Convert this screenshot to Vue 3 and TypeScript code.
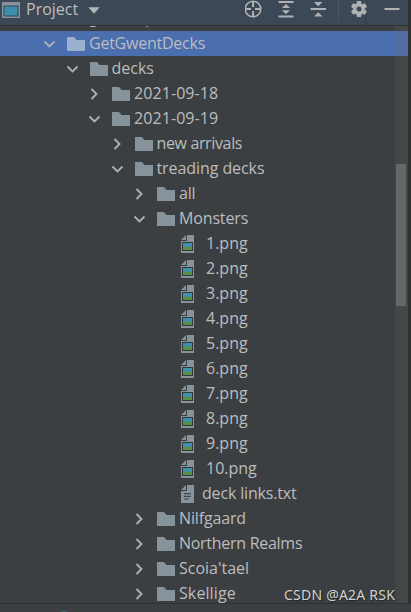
<script setup lang="ts">
type Icon = 'folder' | 'image' | 'text'
interface Row { name: string; depth: number; icon: Icon; open?: boolean; selected?: boolean; tracking?: number }

const rows: Row[] = [
  { name: 'GetGwentDecks', depth: 0, icon: 'folder', open: true, selected: true, tracking: -0.24 },
  { name: 'decks', depth: 1, icon: 'folder', open: true },
  { name: '2021-09-18', depth: 2, icon: 'folder', open: false, tracking: 0.08 },
  { name: '2021-09-19', depth: 2, icon: 'folder', open: true, tracking: 0.08 },
  { name: 'new arrivals', depth: 3, icon: 'folder', open: false, tracking: -0.36 },
  { name: 'treading decks', depth: 3, icon: 'folder', open: true, tracking: -0.08 },
  { name: 'all', depth: 4, icon: 'folder', open: false, tracking: -0.2 },
  { name: 'Monsters', depth: 4, icon: 'folder', open: true, tracking: -0.15 },
  ...Array.from({ length: 10 }, (_, i): Row => ({ name: `${i + 1}.png`, depth: 5, icon: 'image' })),
  { name: 'deck links.txt', depth: 5, icon: 'text', tracking: -0.17 },
  { name: 'Nilfgaard', depth: 4, icon: 'folder', open: false, tracking: -0.15 },
  { name: 'Northern Realms', depth: 4, icon: 'folder', open: false, tracking: -0.28 },
  { name: "Scoia'tael", depth: 4, icon: 'folder', open: false },
  { name: 'Skellige', depth: 4, icon: 'folder', open: false, tracking: 0.1 },
]
const rowStyle = (r: Row) => ({
  paddingLeft: `${43 + r.depth * 22.5}px`,
  letterSpacing: `${r.tracking ?? 0}px`,
})
</script>

<template>
  <div class="panel">
    <header class="bar">
      <svg class="window" width="18" height="16" viewBox="0 0 18 16"><path fill="#87939a" d="M0 0h18v16H0z" /><path fill="#34454f" d="M1.5 3.5h15v11h-15z" /><path fill="#3d8dac" d="M2.5 4.5h13v9h-13z" /></svg>
      <span class="title">Project</span>
      <svg class="caret" width="12" height="7" viewBox="0 0 12 7"><path fill="#b0b5b8" d="M.3.3h11.4L6 6.8z" /></svg>
      <svg class="tools" width="166" height="25" viewBox="0 0 166 25">
        <g fill="none" stroke="#afb1b3" stroke-width="2"><circle cx="8" cy="9" r="7.800" stroke-width="1.600" /><path d="M8 1v6M8 11v6M0 9h6M10 9h6" /><path d="M33.500 2h15M33.500 16.500h15M65.500 9h15.500M139.500 9h15" /></g>
        <path fill="#afb1b3" d="M37 8 41 4l4 4zM37 10.200h8L41 14.200zM69 2h8.500l-4.250 4.200zM69 16.500h8.500L73.250 12.200z" />
        <path stroke="#525658" d="M93.500 0v21" />
        <g transform="translate(114 9)">
          <g fill="#afb1b3"><circle r="5.800" /><path d="M-2-8h4l.7 3h-5.400zM-2 8h4l.7-3h-5.400z" /><path transform="rotate(60)" d="M-2-8h4l.7 3h-5.400zM-2 8h4l.7-3h-5.400z" /><path transform="rotate(120)" d="M-2-8h4l.7 3h-5.400zM-2 8h4l.7-3h-5.400z" /></g>
          <circle r="2.500" fill="#3c4855" />
        </g>
        <path stroke="#343a40" d="M120.500 15v10" />
      </svg>
    </header>
    <div class="tree">
      <div class="cut"><span>gwent spider_</span></div>
      <div v-for="r in rows" :key="r.name" class="row" :class="{ selected: r.selected }" :style="rowStyle(r)">
        <svg class="arrow" width="14" height="14" viewBox="0 0 14 14"><path v-if="r.open !== undefined" :d="r.open ? 'M1.500 4.500 6.500 9.500 11.500 4.500' : 'M3.500 2 8.500 7 3.500 12'" fill="none" stroke="#adb0b2" stroke-width="1.900" /></svg>
        <svg v-if="r.icon === 'folder'" class="folder" width="18" height="14" viewBox="0 0 18 14"><path d="M0 0h7l2.500 3H18v11H0z" /></svg>
        <svg v-else class="file" width="13" height="18" viewBox="0 0 13 18">
          <path fill="#87939a" d="M6 0h7v18H0V6h6zM5 0v5H0z" />
          <template v-if="r.icon === 'image'"><path fill="#30383c" d="M1 7h11v9H1z" /><path fill="#3e8fb0" d="M2 8h9v7H2z" /><path fill="#58903f" d="M2 12.500l2.500-1 2.500 1 2-1.500 2 1.500V15H2z" /></template>
          <path v-else stroke="#414a4f" stroke-width="1.200" d="M3 8.600h7M3 11.300h7M3 14h5" />
        </svg>
        <span class="name" :class="r.icon">{{ r.name }}</span>
      </div>
      <div class="track"><div class="thumb" /></div>
    </div>
    <footer class="foot"><i /></footer>
    <div class="edge" />
    <div class="mark">CSDN @A2A RSK</div>
  </div>
</template>

<style>
body { background: #3c3f41; overflow: hidden; }
</style>
<style scoped>
.panel { position: relative; width: 411px; height: 612px; overflow: hidden; background: #3c3f41; color: #bbbdbf; font: 16px/25px "Open Sans", "Noto Sans", sans-serif; }
.bar { height: 25px; display: flex; background: #3c4855; border-bottom: 1px solid #303234; }
.window { margin: 2px 0 0 2px; }
.title { margin: -3px 0 0 6px; width: 53px; }
.caret { margin: 7px 0 0 9px; }
.tools { margin-left: auto; }
.tree { position: relative; height: 577px; overflow: hidden; }
.cut { height: 5px; overflow: hidden; padding-left: 89px; }
.cut span { display: block; margin-top: -21px; letter-spacing: -0.2px; }
.row { height: 25px; display: flex; align-items: center; white-space: pre; }
.selected { background: #4b6eaf; }
.arrow, .folder, .file { flex: none; }
.folder { margin-left: 10px; fill: #87939a; }
.selected .folder { fill: #9bb0cf; }
.file { margin: 1px 0 0 11px; }
.name { margin-left: 4px; }
.name.image { margin-left: 12.5px; }
.name.text { margin-left: 8.5px; }
.track { position: absolute; right: 3px; top: 0; width: 13px; height: 577px; background: rgb(100 105 100 / 20%); }
.thumb { margin: 138px 2px 0 1px; height: 142px; background: #656866; }
.foot { height: 9px; border-top: 1px solid #2f3133; overflow: hidden; }
.foot i { display: block; margin: 7px 0 0 60px; width: 8px; height: 6px; border-radius: 4px; background: #3f626c; }
.edge { position: absolute; right: 0; top: 0; width: 3px; height: 603px; background: #303131; }
.mark { position: absolute; left: 284px; top: 582px; font: 14px/25px "Noto Sans", sans-serif; letter-spacing: 0.22px; color: #d0d1d1; text-shadow: 1px 1px 1px #222; white-space: nowrap; }
</style>
